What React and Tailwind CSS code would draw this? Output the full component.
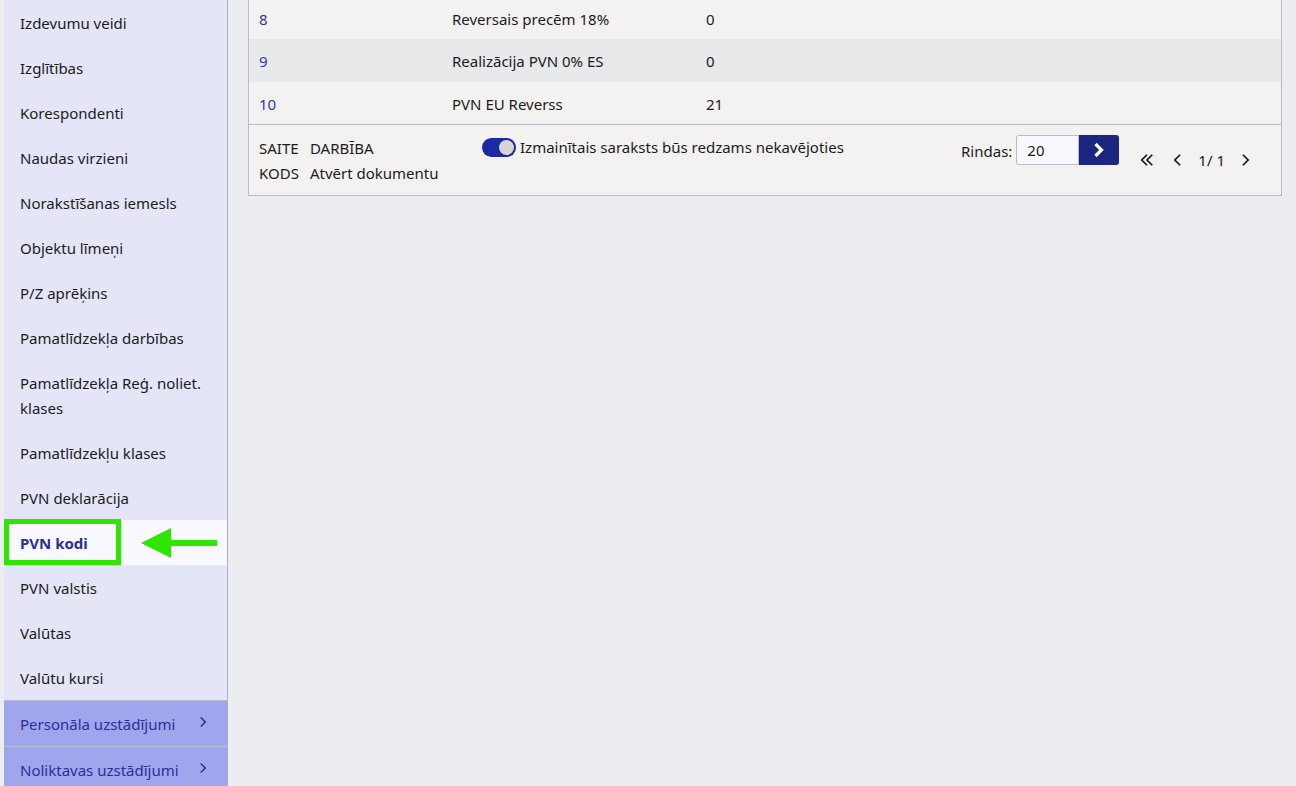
import React from "react";

const items = [
  "Izdevumu veidi",
  "Izglītības",
  "Korespondenti",
  "Naudas virzieni",
  "Norakstīšanas iemesls",
  "Objektu līmeņi",
  "P/Z aprēķins",
  "Pamatlīdzekļa darbības",
  "Pamatlīdzekļa Reģ. noliet. klases",
  "Pamatlīdzekļu klases",
  "PVN deklarācija",
  "PVN kodi",
  "PVN valstis",
  "Valūtas",
  "Valūtu kursi",
];

const rows = [
  { id: "8", name: "Reversais precēm 18%", rate: "0", bg: "bg-[#f3f2f1]", h: "h-[39px]" },
  { id: "9", name: "Realizācija PVN 0% ES", rate: "0", bg: "bg-[#e8e9eb]", h: "h-[43px] pt-[1px]" },
  { id: "10", name: "PVN EU Reverss", rate: "21", bg: "bg-[#f3f2f1]", h: "h-[42px] pt-[2px]" },
];

const Chevron = ({ className }) => (
  <svg viewBox="0 0 10 16" className={className} fill="none" stroke="currentColor" strokeWidth="2">
    <path d="M2 2l6 6-6 6" />
  </svg>
);

const App = () => {
  return (
    <div
      className="flex h-[786px] w-[1296px] overflow-hidden bg-[#ecedf0] pl-1 text-[15px] text-[#1b1b1b]"
      style={{ fontFamily: '"Noto Sans", "Open Sans", sans-serif' }}
    >
      <aside className="flex w-[224px] shrink-0 flex-col overflow-hidden border-r border-[#aab1c6] bg-[#e4e6f8]">
        {items.map((item) => {
          const active = item === "PVN kodi";
          return (
            <div
              key={item}
              className={`relative flex min-h-[45px] shrink-0 items-center px-4 pb-[9px] pt-[11px] leading-[25px] ${
                active ? "bg-[#f8f8fe] font-bold text-[#2a2f97]" : ""
              }`}
            >
              {item}
              {active && (
                <>
                  <div className="absolute left-0 top-[-1px] h-[46px] w-[117px] border-[5px] border-[#2ee600]" />
                  <svg className="absolute left-[132px] top-[7px]" width="86" height="32" viewBox="0 0 86 32">
                    <polygon points="5,16 35,1 35,31" fill="#2ee600" />
                    <rect x="33" y="13" width="48" height="6" fill="#2ee600" />
                  </svg>
                </>
              )}
            </div>
          );
        })}
        <div className="flex h-[46px] shrink-0 items-center justify-between border-t border-[#b7bbd6] bg-[#a0a6ee] px-4 pt-[1px] text-[#2a2f97]">
          Personāla uzstādījumi
          <Chevron className="mb-[4px] mr-1 h-[12px] w-[8px]" />
        </div>
        <div className="flex h-[46px] shrink-0 items-center justify-between border-t border-[#b7bbd6] bg-[#a0a6ee] px-4 pt-[1px] text-[#2a2f97]">
          Noliktavas uzstādījumi
          <Chevron className="mb-[4px] mr-1 h-[12px] w-[8px]" />
        </div>
      </aside>

      <main className="flex-1 pl-5 pr-[14px]">
        <div className="border-x border-b border-[#b5bccc] bg-[#f3f2f1]">
          {rows.map((r) => (
            <div key={r.id} className={`flex items-center px-[10px] ${r.h} ${r.bg}`}>
              <span className="w-[193px] text-[#2d3aa8]">{r.id}</span>
              <span className="w-[254px]">{r.name}</span>
              <span>{r.rate}</span>
            </div>
          ))}
          <div className="flex h-[71px] border-t border-[#b5bccc] px-[10px] pt-[11px]">
            <div className="grid h-fit w-[223px] grid-cols-[auto_1fr] gap-x-[11px] leading-[25px]">
              <span>SAITE</span>
              <span>DARBĪBA</span>
              <span>KODS</span>
              <span>Atvērt dokumentu</span>
            </div>
            <div className="flex h-fit items-center gap-1">
              <div className="mt-[1px] flex h-[19px] w-[34px] items-center justify-end rounded-full bg-[#1a2aa0] pr-[2px]">
                <div className="h-[15px] w-[15px] rounded-full bg-[#d8d6d4]" />
              </div>
              <span>Izmainītais saraksts būs redzams nekavējoties</span>
            </div>
            <div className="-mt-[1px] ml-auto flex h-fit items-start pr-[21px]">
              <span className="mr-[4px] mt-[5px]">Rindas:</span>
              <div className="flex h-[30px] w-[63px] items-center rounded-l-[3px] border border-[#b5bccc] bg-[#f9f9fd] px-[10px]">20</div>
              <button className="flex h-[30px] w-[40px] items-center justify-center rounded-r-[3px] bg-[#1c2580] text-white">
                <svg viewBox="0 0 12 16" className="h-[16px] w-[12px]" fill="none" stroke="currentColor" strokeWidth="3.2">
                  <path d="M2.5 2l6 6-6 6" />
                </svg>
              </button>
              <div className="ml-[21px] mt-[14px] flex items-center">
                <svg viewBox="0 0 16 16" className="h-[14px] w-[14px]" fill="none" stroke="currentColor" strokeWidth="2">
                  <path d="M8 2L2 8l6 6M14 2L8 8l6 6" />
                </svg>
                <Chevron className="ml-[19px] h-[14px] w-[9px] rotate-180" />
                <span className="ml-[16px]">1/ 1</span>
                <Chevron className="ml-[16px] h-[14px] w-[9px]" />
              </div>
            </div>
          </div>
        </div>
      </main>
    </div>
  );
};

export default App;
